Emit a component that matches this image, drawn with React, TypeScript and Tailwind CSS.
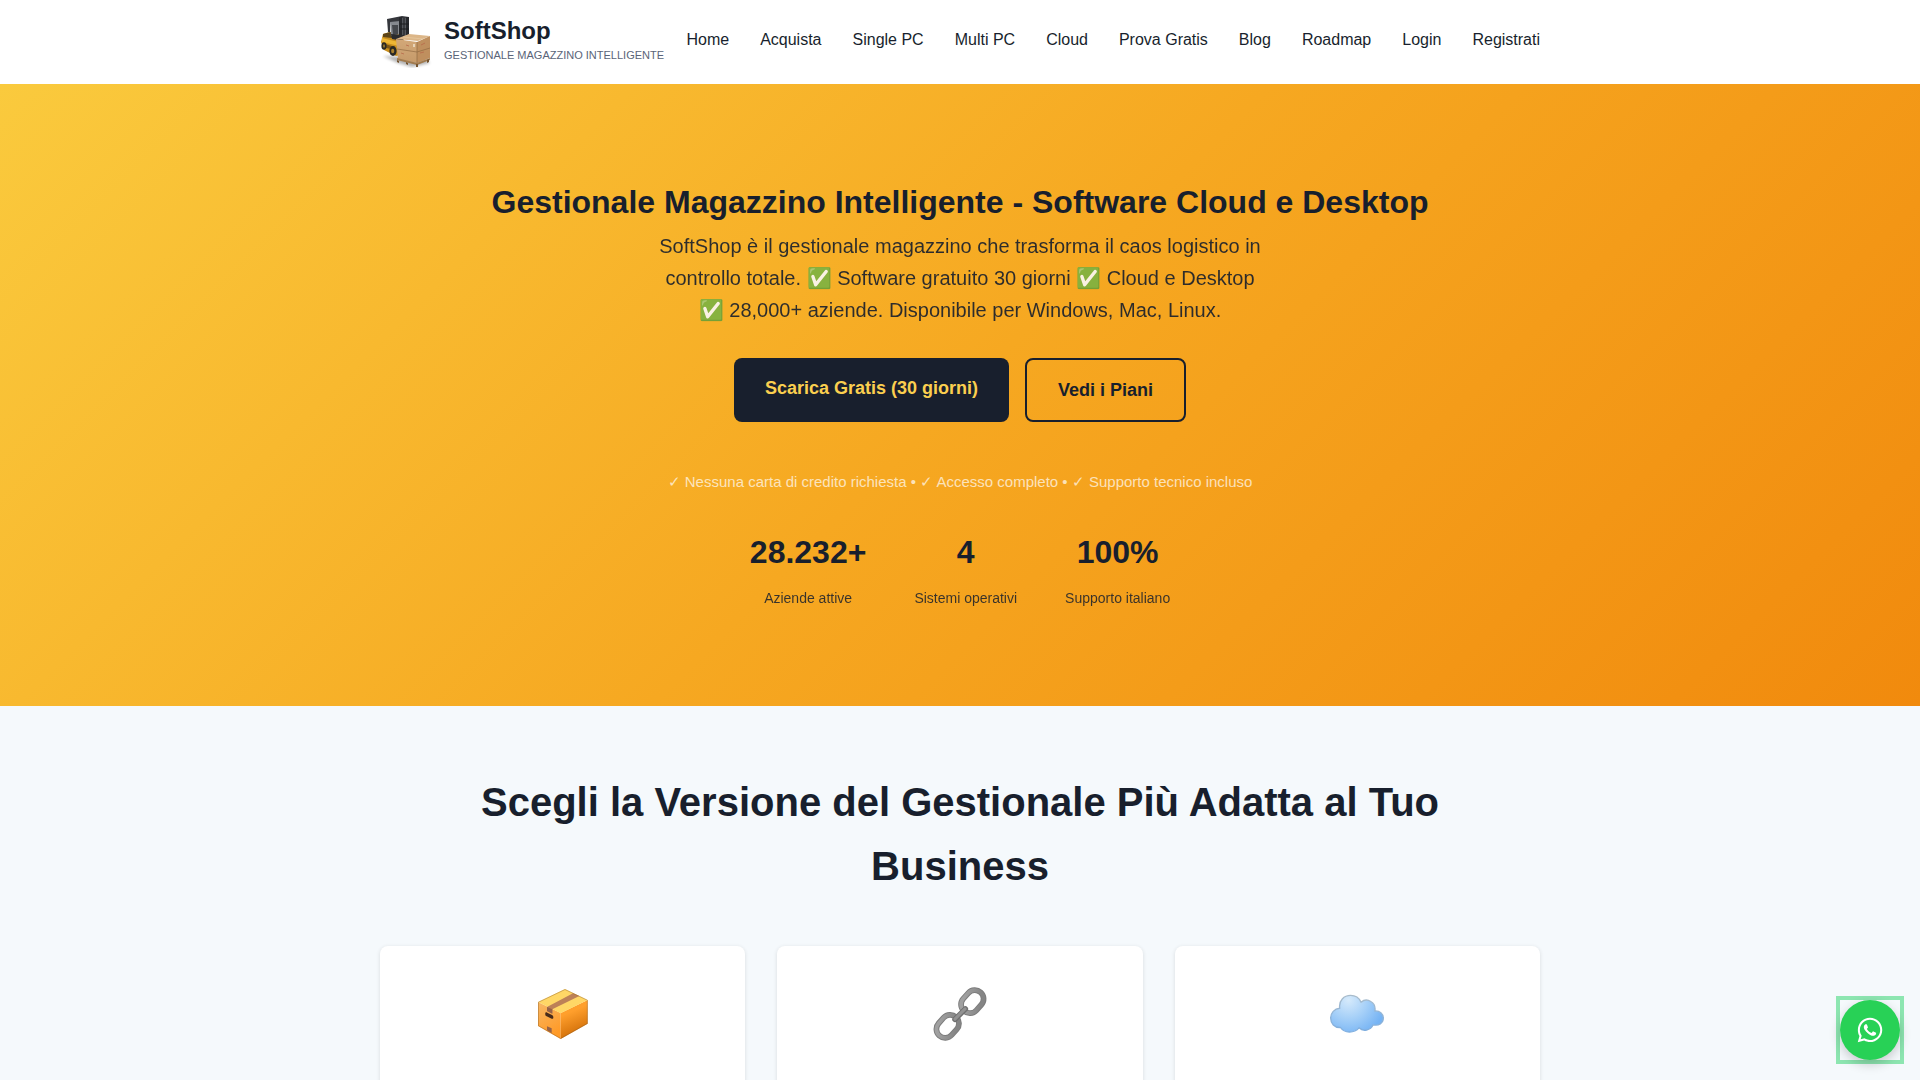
import { FaWhatsapp } from "react-icons/fa";

const navLinks = [
  { href: "#home", label: "Home" },
  { href: "#acquista", label: "Acquista" },
  { href: "#single-pc", label: "Single PC" },
  { href: "#multi-pc", label: "Multi PC" },
  { href: "#cloud", label: "Cloud" },
  { href: "#prova", label: "Prova Gratis" },
  { href: "#blog", label: "Blog" },
  { href: "#roadmap", label: "Roadmap" },
  { href: "#login", label: "Login" },
  { href: "#registrati", label: "Registrati" },
];

const stats = [
  { value: "28.232+", label: "Aziende attive" },
  { value: "4", label: "Sistemi operativi" },
  { value: "100%", label: "Supporto italiano" },
];

const versions = [
  { id: "single", Icon: PackageIcon },
  { id: "multi", Icon: ChainIcon },
  { id: "cloud", Icon: CloudIcon },
];

function ForkliftLogo() {
  return (
    <svg className="w-[52px] h-[52px] shrink-0" viewBox="0 0 52 52" aria-hidden="true">
      <defs>
        <filter id="soft" x="-20%" y="-50%" width="140%" height="200%">
          <feGaussianBlur stdDeviation="1.4" />
        </filter>
        <linearGradient id="boxFront" x1="0" y1="0" x2="0" y2="1">
          <stop offset="0" stopColor="#d3a878" />
          <stop offset="1" stopColor="#c59a6a" />
        </linearGradient>
      </defs>
      {/* ground shadow */}
      <path d="M3 40l15 7 14 4 18-4-6-5z" fill="#000" opacity="0.3" filter="url(#soft)" />
      {/* body */}
      <path d="M3 18l7-2 12 3 3 8-4 12-5 1-12-6-3-8z" fill="#c98f1e" />
      <path d="M2 22l8 2 9 2v4l-17-4z" fill="#eeb634" />
      <path d="M3 18l7-2 4 2-2 4-9-1z" fill="#5d4518" />
      <path d="M2 27l13 4v3L2 31z" fill="#7c5616" />
      {/* wheels */}
      <ellipse cx="4" cy="30" rx="2.6" ry="3.8" fill="#2b2924" />
      <ellipse cx="4" cy="30" rx="1.1" ry="1.7" fill="#8d6f2e" />
      <ellipse cx="13" cy="35" rx="3.6" ry="5" fill="#2a2824" />
      <ellipse cx="12.7" cy="35" rx="1.6" ry="2.3" fill="#a9802c" />
      {/* mast */}
      <path d="M7 3l15-3 7 1v19h-4l-1-14-14 1v9H8z" fill="#35373c" />
      <path d="M10 6l10-1v13l-9 2z" fill="#85898f" />
      <path d="M12 9h6v9l-5 1z" fill="#44474c" />
      <path d="M19 1h3v22h-3zM26 1h3v19h-3z" fill="#26282c" />
      <path d="M22 2h4v19h-4z" fill="#54575d" />
      <path d="M24 2v19M20 8h9M20 13h9" stroke="#1b1c1f" />
      <path d="M11 18l13 1-1 6-11-2z" fill="#2a2b2e" />
      {/* boxes */}
      <path d="M16 23l13-5 21 2-12 5z" fill="#dcb688" />
      <path d="M16 23l21 3v21l-19-4z" fill="url(#boxFront)" />
      <path d="M37 26l13-6v22l-13 5z" fill="#bf8f5e" />
      <path d="M37 26v21M17 33l20 3 13-4" stroke="#916a42" strokeWidth="0.7" fill="none" />
      <path d="M23 21l20 2" stroke="#e8cba2" strokeWidth="0.7" fill="none" />
      <path d="M33 28h2v3h-2z" fill="#e8d4b8" />
      <path d="M26 29l3 1M21 37l3 1M41 29l4-2M40 37l4-1" stroke="#b7694a" strokeWidth="0.8" fill="none" />
      {/* pallet */}
      <path d="M17 42l20 5 13-5v2l-13 5-20-5z" fill="#a17a4d" />
      <path d="M17 44l2 1v2l-2-1zM26 46l2 1v2l-2-1zM36 48h2v3h-2zM47 44l2-1v3l-2 1z" fill="#74532f" />
    </svg>
  );
}

function PackageIcon() {
  return (
    <svg className="w-[50px] h-[50px]" viewBox="0 0 150 150" aria-hidden="true">
      <defs>
        <linearGradient id="pkgLeft" x1="0" y1="0" x2="0.4" y2="1">
          <stop offset="0" stopColor="#f7b866" />
          <stop offset="1" stopColor="#ff9a27" />
        </linearGradient>
        <linearGradient id="pkgRight" x1="0.3" y1="0" x2="0.6" y2="1">
          <stop offset="0.3" stopColor="#ff9f2c" />
          <stop offset="1" stopColor="#c96602" />
        </linearGradient>
      </defs>
      <path d="M0 39l68 33v78L0 111z" fill="url(#pkgLeft)" />
      <path d="M68 72l81-39v71l-81 46z" fill="url(#pkgRight)" />
      <path d="M0 39L81 0l68 33-81 40z" fill="#ffd766" />
      <path d="M27 54l78-41 19 8-81 40v13l-16-8z" fill="#bd8157" />
      <path d="M27 54l16 7v13l-16-8z" fill="#966247" />
      <path d="M27 112l14 6v14l-14-8z" fill="#966247" />
      <path d="M22 72c0-3 3-3 6-1l14 7c3 1 4 5 4 8s-2 4-5 3l-15-7c-4-2-5-6-4-10z" fill="#472b1b" />
      <path
        d="M1.500 39.500L81 1.500l67 32v70l-80 45L1.500 110.500z"
        fill="none"
        stroke="#8c5b20"
        strokeOpacity="0.4"
        strokeWidth="3"
      />
    </svg>
  );
}

function ChainIcon() {
  return (
    <svg className="w-[54px] h-[54px]" viewBox="0 0 160 160" fill="none" aria-hidden="true">
      <defs>
        <linearGradient id="chain" x1="0" y1="0" x2="1" y2="1">
          <stop offset="0.2" stopColor="#a0a0a0" />
          <stop offset="0.8" stopColor="#858585" />
        </linearGradient>
      </defs>
      {/* two rings joined by a short bar */}
      <g stroke="#7c7c7c" strokeWidth="17">
        <rect x="-37" y="-26" width="74" height="52" rx="26" transform="translate(116.500 43.500) rotate(-48)" />
        <rect x="-37" y="-26" width="74" height="52" rx="26" transform="translate(43.500 116.500) rotate(-48)" />
      </g>
      <g stroke="url(#chain)" strokeWidth="11">
        <rect x="-37" y="-26" width="74" height="52" rx="26" transform="translate(116.500 43.500) rotate(-48)" />
        <rect x="-37" y="-26" width="74" height="52" rx="26" transform="translate(43.500 116.500) rotate(-48)" />
      </g>
      <path d="M65 96l31-31" stroke="#6f6f6f" strokeWidth="16" strokeLinecap="round" />
      <path d="M65 95l30-30" stroke="#929292" strokeWidth="9" strokeLinecap="round" />
    </svg>
  );
}

function CloudIcon() {
  return (
    <svg className="w-[54px] h-[54px]" viewBox="0 0 160 160" aria-hidden="true">
      <defs>
        <radialGradient id="cloudFill" gradientUnits="userSpaceOnUse" cx="55" cy="38" r="110">
          <stop offset="0" stopColor="#d6eafb" />
          <stop offset="0.5" stopColor="#a6d0f8" />
          <stop offset="1" stopColor="#75b3f4" />
        </radialGradient>
        <linearGradient id="cloudEdge" x1="0" y1="0" x2="0" y2="1">
          <stop offset="0" stopColor="#a9bccb" />
          <stop offset="1" stopColor="#7eaee0" />
        </linearGradient>
      </defs>
      <path
        d="M29 63C25 40 42 25 61 25c14 0 25 7 31 20 8-7 20-8 29-2 10 6 14 16 12 28 14-1 25 8 25 21 0 15-14 24-30 20-8 17-30 21-42 9-14 16-43 17-55-1C13 121 2 108 2 92c0-15 11-28 27-29z"
        fill="url(#cloudFill)"
        stroke="url(#cloudEdge)"
        strokeWidth="4"
        strokeLinejoin="round"
      />
    </svg>
  );
}

export default function App() {
  return (
    <div className="min-h-screen overflow-x-hidden bg-[#f5f9fc] font-['Liberation_Sans',Arial,sans-serif] text-base text-[#181f2d]">
      {/* Header */}
      <header className="bg-white py-4">
        <div className="max-w-[1200px] mx-auto px-5 flex items-center justify-between">
          <a href="#home" className="flex items-center gap-3">
            <ForkliftLogo />
            <span className="flex flex-col pb-1 whitespace-nowrap">
              <span className="text-2xl leading-[30px] font-bold">SoftShop</span>
              <span className="text-[11px] leading-[18px] text-[#5a6478] uppercase">
                Gestionale magazzino intelligente
              </span>
            </span>
          </a>

          <nav className="flex items-center gap-[31px] pb-1">
            {navLinks.map((link) => (
              <a key={link.href} href={link.href} className="whitespace-nowrap hover:text-amber-500">
                {link.label}
              </a>
            ))}
          </nav>
        </div>
      </header>

      <main>
        {/* Hero */}
        <section className="bg-[linear-gradient(135deg,#faca3d_0%,#f6a821_50%,#f18a0d_100%)] py-24 text-center">
          <div className="max-w-[1200px] mx-auto px-5">
            <h1 className="text-[32px] leading-11 font-bold mb-1.5">
              Gestionale Magazzino Intelligente - Software Cloud e Desktop
            </h1>
            <p className="max-w-[640px] mx-auto text-xl leading-8 mb-8 opacity-90">
              SoftShop è il gestionale magazzino che trasforma il caos logistico in
              <br />
              controllo totale. ✅ Software gratuito 30 giorni ✅ Cloud e Desktop
              <br />
              ✅ 28,000+ aziende. Disponibile per Windows, Mac, Linux.
            </p>

            <div className="flex flex-wrap justify-center gap-4 mb-12 text-lg leading-7 font-bold">
              <a href="#prova" className="px-[31px] py-4 rounded-lg bg-[#181f2d] text-[#fbcf4f]">
                Scarica Gratis (30 giorni)
              </a>
              <a href="#acquista" className="px-[31px] py-4 rounded-lg border-2 border-[#181f2d]">
                Vedi i Piani
              </a>
            </div>

            <p className="text-[15px] leading-6 text-white/70 mb-8">
              ✓ Nessuna carta di credito richiesta • ✓ Accesso completo • ✓ Supporto tecnico incluso
            </p>

            <div className="flex justify-center gap-12">
              {stats.map((stat) => (
                <div key={stat.label}>
                  <div className="text-[32px] leading-13 font-bold mb-2">{stat.value}</div>
                  <div className="text-sm leading-6 opacity-85">{stat.label}</div>
                </div>
              ))}
            </div>
          </div>
        </section>

        {/* Versions */}
        <section className="py-16">
          <div className="max-w-[1200px] mx-auto px-5">
            <h2 className="max-w-[1100px] mx-auto text-[40px] leading-16 font-bold text-center mb-12">
              Scegli la Versione del Gestionale Più Adatta al Tuo Business
            </h2>
            <div className="grid grid-cols-3 gap-8">
              {versions.map(({ id, Icon }) => (
                <article
                  key={id}
                  className="bg-white rounded-lg p-8 min-h-80 shadow-[0_1px_4px_rgba(0,0,0,0.12)]"
                >
                  <div className="flex h-[72px] items-center justify-center">
                    <Icon />
                  </div>
                </article>
              ))}
            </div>
          </div>
        </section>
      </main>

      {/* WhatsApp button */}
      <a
        href="#whatsapp"
        aria-label="WhatsApp"
        className="fixed right-5 bottom-5 z-50 shadow-[0_0_0_4px_rgba(37,211,102,0.5)]"
      >
        <span className="flex w-15 h-15 items-center justify-center rounded-full bg-[#28d156] text-white shadow-[0_4px_12px_rgba(0,0,0,0.2)]">
          <FaWhatsapp className="w-7 h-7" />
        </span>
      </a>
    </div>
  );
}
